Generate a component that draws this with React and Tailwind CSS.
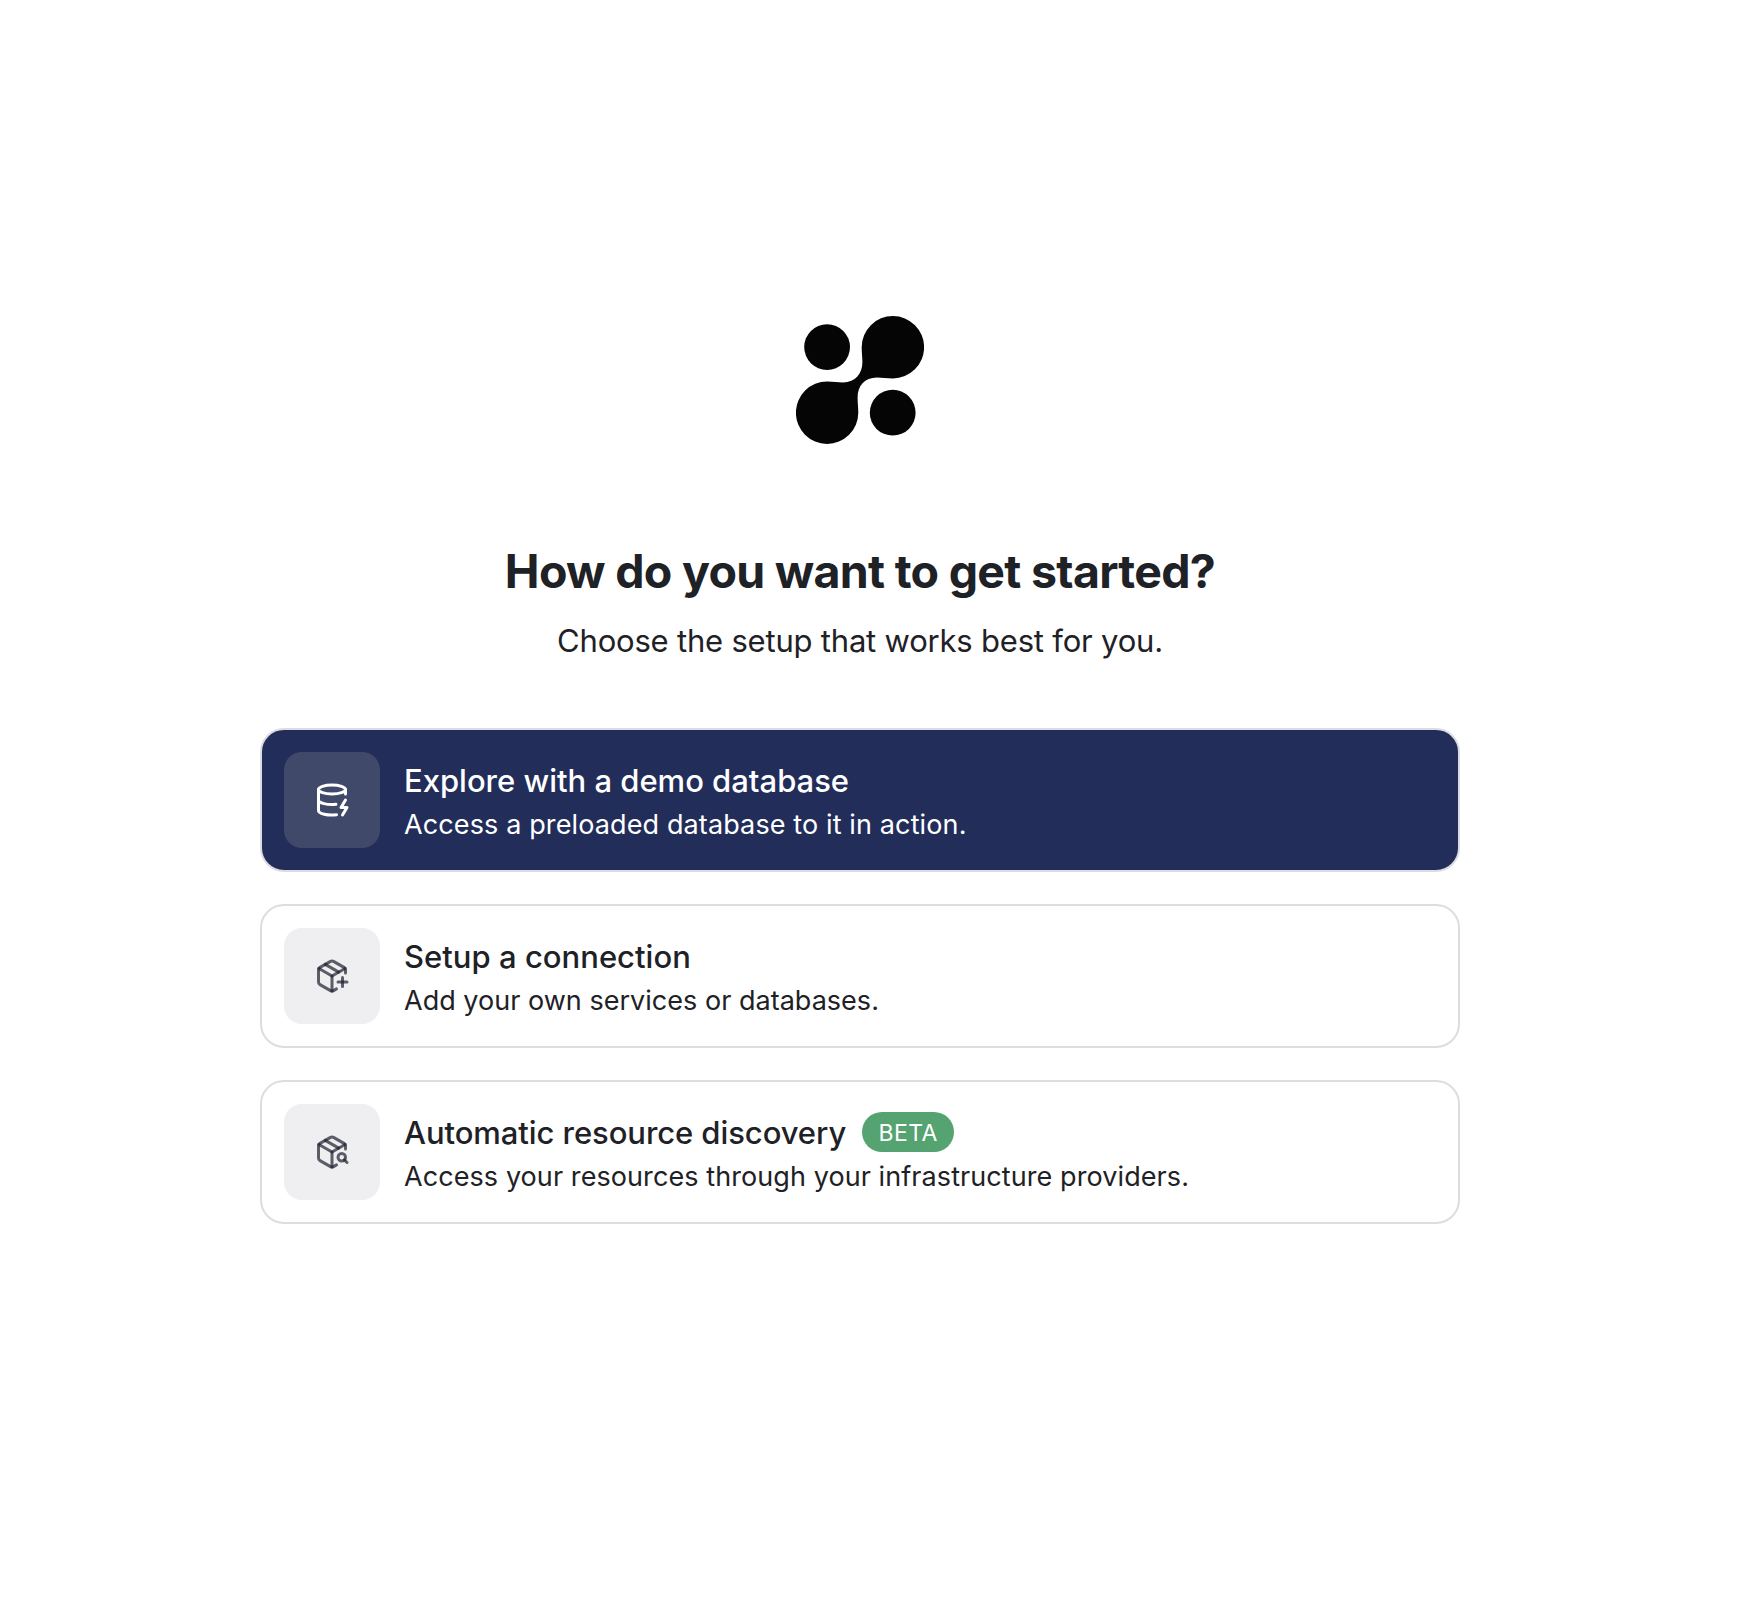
import React from "react";
import { DatabaseZap, PackagePlus, PackageSearch } from "lucide-react";

function Logo() {
  return (
    <svg viewBox="0 0 128 128" className="size-32 fill-[#050505]" aria-hidden="true">
      <circle cx="31.1" cy="31.1" r="22.9" />
      <circle cx="96.7" cy="96.7" r="22.9" />
      <path d="M65.7 31.2C65.7 37 66.4 41 66.4 46C66.4 57.5 59.5 66.4 47 66.4C42 66.4 37 65.5 31.2 65.5A31.2 31.2 0 1 0 62.3 96.8C62.3 91 61.6 87 61.6 81.5C61.6 70 68.5 61.6 81 61.6C86 61.6 91 62.4 96.8 62.4A31.2 31.2 0 1 0 65.7 31.2Z" />
    </svg>
  );
}

const options = [
  {
    title: "Explore with a demo database",
    titleClass: "tracking-[-0.01px]",
    description: "Access a preloaded database to it in action.",
    descriptionClass: "tracking-[0.12px]",
    Icon: DatabaseZap,
    primary: true,
  },
  {
    title: "Setup a connection",
    titleClass: "tracking-[0.02px]",
    description: "Add your own services or databases.",
    descriptionClass: "tracking-[0.02px]",
    Icon: PackagePlus,
  },
  {
    title: "Automatic resource discovery",
    titleClass: "tracking-[-0.07px]",
    description: "Access your resources through your infrastructure providers.",
    descriptionClass: "tracking-[0.08px]",
    Icon: PackageSearch,
    badge: "BETA",
  },
];

function OptionCard({ title, titleClass, description, descriptionClass, Icon, badge, primary }) {
  return (
    <button
      type="button"
      className={`flex h-36 w-full items-center gap-6 rounded-3xl border-2 border-[#dcdce3] px-[22px] text-left ${
        primary ? "bg-[#222d5a] text-white" : "bg-white text-[#1e2126]"
      }`}
    >
      <span
        className={`flex size-24 shrink-0 items-center justify-center rounded-[18px] ${
          primary ? "bg-[#41496b] text-white" : "bg-[#efeff1] text-[#1c202d]/70"
        }`}
      >
        <Icon size={36} strokeWidth={2} />
      </span>
      <span className="flex flex-col pt-0.5">
        <span className="flex h-12 items-center gap-4">
          <span className={`text-[31px] leading-[48px] font-medium ${titleClass}`}>{title}</span>
          {badge && (
            <span className="mb-0.5 flex h-10 w-[92px] items-center justify-center rounded-full bg-[#55a371] pt-0.5 text-[23px] tracking-[0.4px] text-white">
              {badge}
            </span>
          )}
        </span>
        <span className={`text-[27px] leading-10 ${descriptionClass}`}>{description}</span>
      </span>
    </button>
  );
}

export default function App() {
  return (
    <div className="min-h-screen bg-white pt-[316px] font-['Inter',sans-serif] text-[#1e2126]">
      <main className="ml-[260px] flex w-[1200px] flex-col items-center">
        <Logo />
        <h1 className="mt-[95px] text-[46.5px] leading-[64px] font-bold tracking-[-0.7px]">
          How do you want to get started?
        </h1>
        <p className="mt-[14px] text-[31px] leading-[48px] tracking-[-0.2px]">
          Choose the setup that works best for you.
        </p>
        <div className="mt-[63px] flex w-full flex-col gap-8">
          {options.map((option) => (
            <OptionCard key={option.title} {...option} />
          ))}
        </div>
      </main>
    </div>
  );
}
